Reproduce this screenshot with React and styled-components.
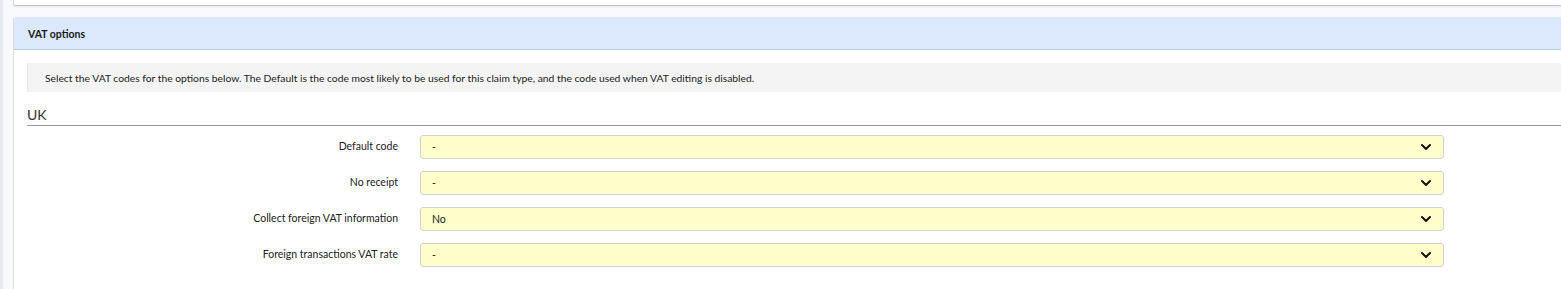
import React from 'react';
import styled, { createGlobalStyle } from 'styled-components';
import { ChevronDown } from 'lucide-react';

const GlobalStyle = createGlobalStyle`
  html, body {
    margin: 0;
    padding: 0;
    background: #f7f9fc;
    overflow: hidden;
  }
  body {
    font-family: Lato, "Open Sans", sans-serif;
    color: #222;
  }
`;

const Page = styled.div`
  min-height: 289px;
  border-left: 3px solid #e6eaf0;
  padding-left: 10px;
  box-sizing: border-box;
`;

const TopCard = styled.div`
  height: 5px;
  background: #fff;
  border-left: 1px solid #dadada;
  border-bottom: 1px solid #c4c4c4;
  border-bottom-left-radius: 3px;
  box-shadow: 0 1px 2px rgba(0, 0, 0, 0.08);
  margin-bottom: 11px;
`;

const Card = styled.section`
  background: #fff;
  border-left: 1px solid #dadada;
  border-top: 1px solid #e2e8f2;
  border-top-left-radius: 3px;
  min-height: 272px;
`;

const CardHeader = styled.h2`
  margin: 0;
  height: 31px;
  display: flex;
  align-items: center;
  padding-left: 14px;
  background: #dce8fc;
  border-bottom: 1px solid #b9c8e2;
  font-size: 10.5px;
  font-weight: 700;
  color: #1a1a1a;
`;

const CardBody = styled.div`
  padding: 13px 0 0 13px;
`;

const InfoBox = styled.div`
  height: 29px;
  display: flex;
  align-items: center;
  padding-left: 17px;
  background: #f4f4f4;
  border-left: 1px solid #dbe5f5;
  border-radius: 2px;
  font-size: 10.3px;
  color: #222;
`;

const GroupTitle = styled.h3`
  margin: 14px 0 0;
  padding-bottom: 1px;
  font-size: 14px;
  font-weight: 400;
  line-height: 18px;
  color: #333;
  border-bottom: 1px solid #9a9a9a;
`;

const Rows = styled.div`
  display: flex;
  flex-direction: column;
  gap: 12px;
  padding-top: 9px;
`;

const Row = styled.div`
  display: grid;
  grid-template-columns: 371px 1024px;
  column-gap: 22px;
  align-items: center;
`;

const Label = styled.label`
  text-align: right;
  font-size: 10.5px;
  color: #222;
  padding-bottom: 2px;
`;

const Select = styled.div`
  height: 22px;
  display: flex;
  align-items: center;
  justify-content: space-between;
  padding: 0 9px 0 11px;
  background: #ffffcc;
  border: 1px solid #d2d2d2;
  border-radius: 3px;
  font-size: 10.5px;
  color: #222;
`;

const fields = [
  { label: 'Default code', value: '-' },
  { label: 'No receipt', value: '-' },
  { label: 'Collect foreign VAT information', value: 'No' },
  { label: 'Foreign transactions VAT rate', value: '-' },
];

export default function App() {
  return (
    <>
      <GlobalStyle />
      <Page>
        <TopCard />
        <Card>
          <CardHeader>VAT options</CardHeader>
          <CardBody>
            <InfoBox>
              Select the VAT codes for the options below. The Default is the code most likely to be used for this claim type, and the code used when VAT editing is disabled.
            </InfoBox>
            <GroupTitle>UK</GroupTitle>
            <Rows>
              {fields.map((f) => (
                <Row key={f.label}>
                  <Label>{f.label}</Label>
                  <Select>
                    <span>{f.value}</span>
                    <ChevronDown size={16} strokeWidth={3} color="#111" />
                  </Select>
                </Row>
              ))}
            </Rows>
          </CardBody>
        </Card>
      </Page>
    </>
  );
}
